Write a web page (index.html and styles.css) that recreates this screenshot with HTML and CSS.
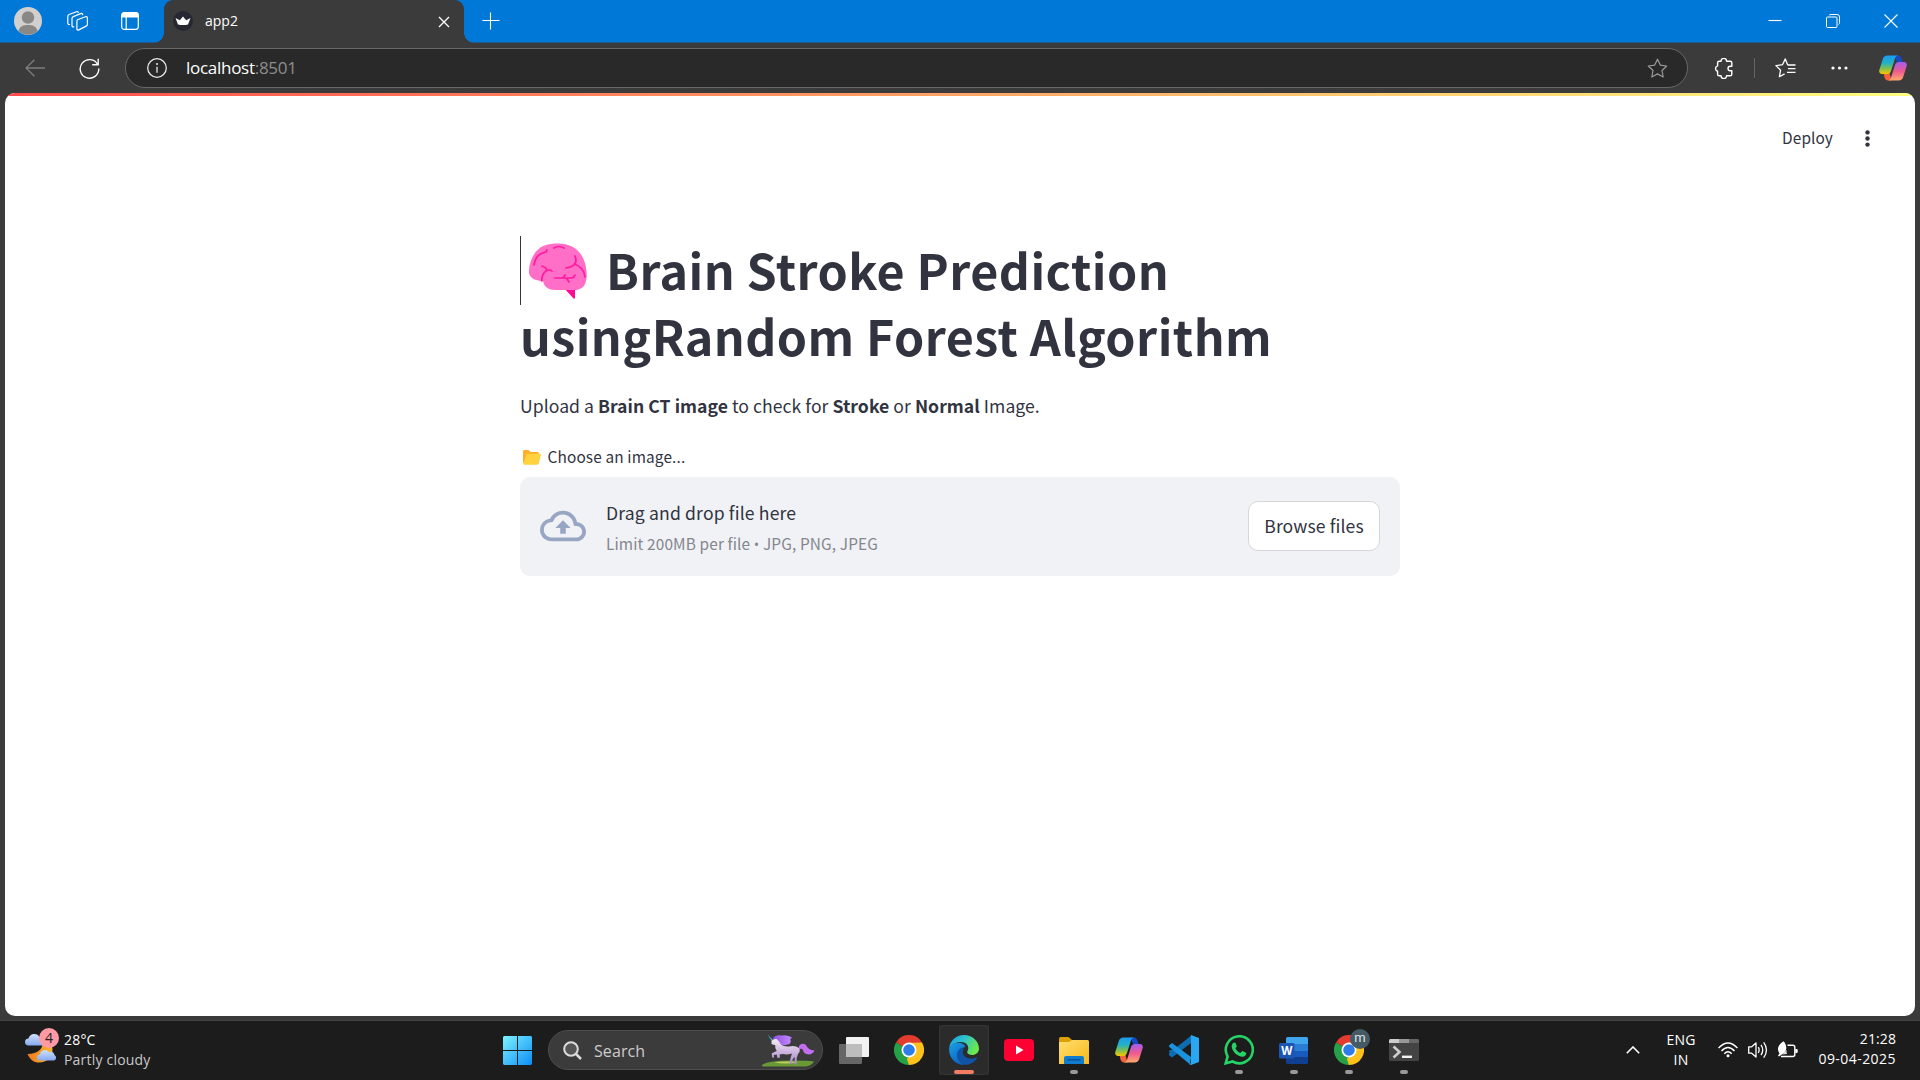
FILE: index.html
```html
<!DOCTYPE html>
<html lang="en">
<head>
<meta charset="utf-8">
<title>app2</title>
<link rel="stylesheet" href="styles.css">
</head>
<body>
<svg class="defs" width="0" height="0" aria-hidden="true">
  <defs>
    <linearGradient id="copL" x1="0" y1="0" x2="0" y2="1"><stop offset="0" stop-color="#1a9df0"/><stop offset=".4" stop-color="#22b0c8"/><stop offset=".7" stop-color="#7fbf50"/><stop offset="1" stop-color="#f8c800"/></linearGradient>
    <linearGradient id="copR" x1="0" y1="0" x2="0" y2="1"><stop offset="0" stop-color="#a45cf0"/><stop offset=".5" stop-color="#ee5a90"/><stop offset="1" stop-color="#ffa96a"/></linearGradient>
    <linearGradient id="winG" x1="0" y1="0" x2="1" y2="1"><stop offset="0" stop-color="#7df3ff"/><stop offset="1" stop-color="#0c8cf5"/></linearGradient>
    <linearGradient id="edgeTop" x1="0" y1="0" x2="1" y2=".4"><stop offset="0" stop-color="#1a9de0"/><stop offset=".5" stop-color="#2ec2cf"/><stop offset="1" stop-color="#6ae84e"/></linearGradient>
    <linearGradient id="edgeL" x1="0" y1="0" x2=".6" y2="1"><stop offset="0" stop-color="#1ba0e6"/><stop offset="1" stop-color="#0a63c0"/></linearGradient>
    <linearGradient id="folder" x1="0" y1="0" x2="1" y2="1"><stop offset="0" stop-color="#ffdf70"/><stop offset="1" stop-color="#f9b81a"/></linearGradient>
    <linearGradient id="mane" x1="0" y1="0" x2="1" y2="0"><stop offset="0" stop-color="#8a4fe0"/><stop offset="1" stop-color="#c98bff"/></linearGradient>
    <linearGradient id="coat" x1="0" y1="0" x2="0" y2="1"><stop offset="0" stop-color="#f3e9f6"/><stop offset="1" stop-color="#a883c8"/></linearGradient>
    <linearGradient id="cloud" x1="0" y1="0" x2="0" y2="1"><stop offset="0" stop-color="#cfe0fb"/><stop offset="1" stop-color="#86aaf0"/></linearGradient>
    <linearGradient id="moon" x1="0" y1="0" x2="1" y2="0"><stop offset="0" stop-color="#f07a20"/><stop offset="1" stop-color="#fbb62c"/></linearGradient>
    <symbol id="copilot" viewBox="0 0 28 26">
      <path d="M15 .5h4c2 0 3 1.500 3.500 3.500l1.500 4h-5z" fill="#1848c8"/>
      <path d="M9 25.500c-2 0-3-1.500-3.500-3L4.500 18h6l2 7.500z" fill="#f4623a"/>
      <path d="M8.500.5H19c-2 .3-2.800 2-3.400 4L12 16c-.7 2-2 3-4 3H3C.8 19-.2 17.200.3 15L3.800 4C4.500 1.800 6 .5 8.500.5z" fill="url(#copL)"/>
      <path d="M19.500 25.500H9c2-.3 2.800-2 3.400-4L16 10c.7-2 2-3 4-3h5c2.200 0 3.200 1.800 2.700 4l-3.500 11c-.7 2.200-2.200 3.500-4.700 3.500z" fill="url(#copR)"/>
    </symbol>
    <symbol id="chrome" viewBox="0 0 48 48">
      <path d="M24 24L3.200 12A24 24 0 0 1 44.800 12z" fill="#e33b2e"/>
      <path d="M24 24L44.800 12A24 24 0 0 1 24 48z" fill="#fcc21b"/>
      <path d="M24 24L24 48A24 24 0 0 1 3.200 12z" fill="#26a148"/>
      <path d="M24 12h20.800L34 30z" fill="#fcc21b"/>
      <path d="M34.400 30L24 48 19 34z" fill="#fcc21b"/>
      <path d="M3.200 12L13.600 30l10.400 6-7 4z" fill="#26a148"/>
      <path d="M3.200 12h41.600L24 13z" fill="#e33b2e"/>
      <circle cx="24" cy="24" r="12" fill="#fff"/><circle cx="24" cy="24" r="9.300" fill="#2f7de9"/>
    </symbol>
  </defs>
</svg>
<div class="screen">
  <header class="titlebar">
    <div class="title-left">
      <svg class="avatar" viewBox="0 0 28 28"><circle cx="14" cy="14" r="14" fill="#d2d0ce"/><circle cx="14" cy="10.500" r="6.200" fill="#8a8886"/><path d="M4.500 24c1-5 5-6 9.500-6s8.500 1 9.500 6A14 14 0 0 1 4.500 24z" fill="#8a8886"/></svg>
      <svg class="workspaces" viewBox="0 0 22 20" fill="none" stroke="#fff" stroke-width="1.200" stroke-linejoin="round" stroke-linecap="round"><path d="M10.500 8.700l8-3c1-.3 1.900.2 1.900 1.200v6.300c0 .9-.4 1.500-1.200 1.900l-7.400 3.800c-1 .5-1.900 0-1.900-1v-7.300c0-.9 0-1.500.6-1.900z"/><path d="M6.800 15.800c-1.300.5-1.800-.2-1.800-1.300V7.600c0-1 .4-1.600 1.300-2l7.400-3c1-.4 2 .1 2 1.100"/><path d="M2.500 13.500C1.300 13.600.8 13 .8 12V5.500c0-1 .4-1.600 1.300-2L9.500.8c.9-.3 1.700 0 1.900.7"/></svg>
      <svg class="vtabs" viewBox="0 0 18 18"><rect x=".7" y=".7" width="16.600" height="16.600" rx="2.500" fill="none" stroke="#fff" stroke-width="1.200"/><path d="M.5 5.500V3A2.500 2.500 0 0 1 3 .5h12A2.500 2.500 0 0 1 17.500 3v2.500z" fill="#fff"/><path d="M5.200 5v12" stroke="#fff" stroke-width="1.200"/></svg>
    </div>
    <div class="tab">
      <svg class="favicon" viewBox="0 0 20 20"><circle cx="10" cy="10" r="10" fill="#262730"/><path d="M2.500 7l4.300 2.200L10 5.500l3.200 3.700L17.500 7l-2.500 6.500c-3 .8-7 .8-10 0z" fill="#fff"/></svg>
      <span class="tab-title">app2</span>
      <svg class="tab-close" viewBox="0 0 12 12"><path d="M1 1l10 10M11 1L1 11" stroke="#fff" stroke-width="1.300"/></svg>
    </div>
    <svg class="newtab" viewBox="0 0 18 18"><path d="M8.500 .5v17M.5 8.500h17" stroke="#fff" stroke-width="1.100"/></svg>
    <div class="window-controls">
      <svg width="14" height="14" viewBox="0 0 14 14"><path d="M.5 6.500h13" stroke="#fff" stroke-width="1.100"/></svg>
      <svg width="14" height="14" viewBox="0 0 14 14" fill="none" stroke="#fff"><rect x=".5" y="3" width="10.500" height="10.500" rx="1"/><path d="M3.200 1.200C3.600.7 4 .5 5 .5h6a2.500 2.500 0 0 1 2.500 2.500v5.500c0 1-.2 1.500-.8 2"/></svg>
      <svg width="14" height="14" viewBox="0 0 14 14"><path d="M.5.5l13 13M13.500.5l-13 13" stroke="#fff" stroke-width="1.100"/></svg>
    </div>
  </header>
  <nav class="toolbar">
    <svg class="back" viewBox="0 0 20 18"><path d="M9.500.7L1 9l8.500 8.300M1 9h19" fill="none" stroke="#7d7d7d" stroke-width="1.300"/></svg>
    <svg class="reload" viewBox="0 0 21 21"><path d="M18.700 6.500A9.300 9.300 0 1 0 19.800 10.500M19.200.8v6h-6" fill="none" stroke="#fff" stroke-width="1.400"/></svg>
    <div class="address">
      <svg class="info" viewBox="0 0 20 20"><circle cx="10" cy="10" r="9.300" fill="none" stroke="#e8e8e8" stroke-width="1.300"/><path d="M10 8.800v6" stroke="#e8e8e8" stroke-width="1.300"/><circle cx="10" cy="6" r="1" fill="#e8e8e8"/></svg>
      <span class="url"><b>localhost</b><i>:8501</i></span>
      <svg class="star" viewBox="0 0 21 20"><path d="M10.500 1.200l2.800 5.900 6.400.9-4.700 4.500 1.200 6.500-5.700-3.100L4.800 19 6 12.500 1.300 8l6.400-.9z" fill="none" stroke="#9a9a9a" stroke-width="1.200" stroke-linejoin="round"/></svg>
    </div>
    <svg class="puzzle" viewBox="0 0 19 21"><path d="M7 3.200a2.800 2.800 0 0 1 5.600 0h3.600a1.600 1.600 0 0 1 1.600 1.600v3.400h-1.500a2.300 2.300 0 0 0 0 4.600h1.500v3.400a1.600 1.600 0 0 1-1.600 1.600h-3.600a2.800 2.800 0 0 1-5.600 0H5.200a1.600 1.600 0 0 1-1.600-1.600v-3a2.800 2.800 0 0 1 0-5.400v-3a1.600 1.600 0 0 1 1.600-1.600z" fill="none" stroke="#fff" stroke-width="1.400" stroke-linejoin="round"/></svg>
    <span class="divider"></span>
    <svg class="favs" viewBox="0 0 21 20"><path d="M12.800 7.200L10.300.9 7.500 6.700l-6.600.9 4.700 4.600-1.200 6.500 5.200-2.800" fill="none" stroke="#fff" stroke-width="1.300" stroke-linejoin="round"/><path d="M13 10.600h7.500M12 14.300h8.500M13 7h7.500" stroke="#fff" stroke-width="1.300"/></svg>
    <svg class="more" viewBox="0 0 17 4" fill="#fff"><circle cx="2" cy="2" r="1.600"/><circle cx="8.500" cy="2" r="1.600"/><circle cx="15" cy="2" r="1.600"/></svg>
    <svg class="side-copilot"><use href="#copilot"/></svg>
  </nav>
  <div class="viewport">
    <div class="page">
      <div class="decoration"></div>
      <div class="app-header">
        <span class="deploy">Deploy</span>
        <svg class="kebab" viewBox="0 0 5 17" fill="#31333f"><circle cx="2.500" cy="2.400" r="2.200"/><circle cx="2.500" cy="8.500" r="2.200"/><circle cx="2.500" cy="14.600" r="2.200"/></svg>
      </div>
      <main class="content">
        <h1 class="heading"><svg class="brain" viewBox="0 0 58 56"><path d="M35 45h11v10.500h-1.500z" fill="#ff0a96"/><path d="M29 .5C41 .5 50 6 54 15c4 8 5 20 2 26-2 4-6 6-11 6H26c-6 0-11-3-12-9-6 0-13-2-14-8C-.5 18 6 6 15 2.800 20 .8 24 .5 29 .5z" fill="#ff6ec7"/><g fill="none" stroke="#ff1a9e" stroke-width="1.700" stroke-linecap="round" stroke-linejoin="round"><path d="M5 22c1-8 6-12 12-13l1-2M25 5q5-3 10 0M13 23q6 2 4 5-5 4-4 10M17 28q4-2 6 0M46 13q4 10-9 12M45 21q10 3 11 13M26 35h8l2-3M32 35h10q3 0 4-3M38 36l2 3"/></g></svg>Brain Stroke Prediction<br>usingRandom Forest Algorithm</h1>
        <p class="intro">Upload a <b>Brain CT image</b> to check for <b>Stroke</b> or <b>Normal</b> Image.</p>
        <label class="choose"><svg class="folder" viewBox="0 0 18 15"><path d="M0 1.800C0 .7.600 0 1.600 0h3.800l2.200 2h6.800c.9 0 1.500.6 1.500 1.500V13H1.500C.6 13 0 12.500 0 11.500z" fill="#ffae2b"/><path d="M5 3.800h11.800c.9 0 1.300.6 1.100 1.400l-2.200 8.300c-.2.800-.7 1.200-1.500 1.200H1.600c-.9 0-1.300-.6-1.100-1.400l2.700-8.200c.3-.9.900-1.300 1.800-1.300z" fill="#ffd23e"/></svg><span>Choose an image...</span></label>
        <section class="dropzone">
          <svg class="cloud" viewBox="0 0 24 24" fill="#97a6c3"><path d="M19.350 10.040A7.490 7.490 0 0 0 12 4C9.110 4 6.600 5.640 5.350 8.040A5.994 5.994 0 0 0 0 14c0 3.310 2.690 6 6 6h13c2.760 0 5-2.240 5-5 0-2.640-2.050-4.780-4.650-4.960zM19 18H6c-2.210 0-4-1.790-4-4 0-2.050 1.530-3.760 3.560-3.970l1.070-.11.5-.95A5.469 5.469 0 0 1 12 6c2.620 0 4.880 1.860 5.390 4.430l.3 1.500 1.530.11A2.980 2.980 0 0 1 22 15c0 1.650-1.350 3-3 3zM8 13h2.550v3h2.900v-3H16l-4-4z"/></svg>
          <div class="drop-text"><span class="drag">Drag and drop file here</span><span class="limit">Limit 200MB per file <span class="bullet">•</span> JPG, PNG, JPEG</span></div>
          <button class="browse">Browse files</button>
        </section>
      </main>
    </div>
  </div>
  <footer class="taskbar">
    <div class="weather">
      <svg class="weather-icon" viewBox="0 0 36 36"><path d="M18 13c0 8-5 13-15.500 13C5 32 9 34.500 14 34.500c8 0 13.500-5 13.500-13 0-5-4-9-9.500-8.500z" fill="url(#moon)"/><path d="M3.500 17.500a3.500 3.500 0 0 1 0-7 6 6 0 0 1 11-1.500 4.500 4.500 0 0 1 4 8.500z" fill="url(#cloud)"/><path d="M15 32.500a3 3 0 0 1 0-6 5 5 0 0 1 9-2.500 4.500 4.500 0 0 1 5.500 3 3 3 0 0 1-.5 5.500z" fill="url(#cloud)"/><circle cx="24" cy="10" r="10" fill="#ff99a4"/><text x="24" y="15" text-anchor="middle" class="badge-num">4</text></svg>
      <div class="weather-text"><span class="temp">28°C</span><span class="cond">Partly cloudy</span></div>
    </div>
    <div class="apps">
      <div class="cell"><svg width="29" height="29" viewBox="0 0 29 29"><path d="M1 0h13v14H0V1zM15 0h13l1 1v13H15zM0 15h14v14H1l-1-1zM15 15h14v13l-1 1H15z" fill="url(#winG)"/></svg></div>
      <div class="search">
        <svg width="19" height="19" viewBox="0 0 19 19" fill="none" stroke="#ddd"><circle cx="8" cy="8" r="6.800" fill="#555" stroke-width="2"/><path d="M13 13l5 5" stroke-width="2.500"/></svg>
        <span class="search-text">Search</span>
        <svg class="unicorn" viewBox="0 0 54 34">
          <path d="M0 32q6-4.500 28-4.500 19 0 24 1-2 4-8 5H3q-4 0-3-1.500z" fill="#6a9a35"/><path d="M12 29.500q10-1.500 24-.5-8 2.500-24 .5z" fill="#c3cf62"/>
          <path d="M37 13q3-4 7-1 2 5 8.500 5.500-2 4-6 4-5-.5-5.500-4.500-1-2-4-1z" fill="#c36df2"/>
          <path d="M5.500 1.500L11 7l-1.200 1z" fill="#4bb6d6"/>
          <path d="M10.500 5.500Q14 1 20 2.500q6-1 10.500 2.500-3 0-2 2 1 2-1 4-5 2-9 .5-3-4-8-6z" fill="url(#mane)"/>
          <path d="M9.500 8q2-2.500 5-2 3 2 4.500 5.500 3 2.500 8 2 6-1.500 10 1.500 2 3-1 6l-1.300 4-.2 6.500h-2l.3-7.500-2 2-1.300 5h-2l1-6 1.500-4.500q-5 1.500-9 .5l-3.500.5.5 3-2.500.5-.8-3.500-3 .5.5 2.500h-2l-.5-4q3-2 5-2.500-2-2.500-1.500-6-2 0-3.700-1z" fill="url(#coat)"/>
        </svg>
      </div>
      <div class="cell first"><svg width="30" height="27" viewBox="0 0 30 27"><rect x="7" y="0" width="23" height="20" rx="1" fill="#f2f2f2"/><rect x="0" y="7" width="23" height="20" rx="1" fill="#666"/><path d="M7 7h16v13H7z" fill="#bdbdbd"/></svg></div>
      <div class="cell"><svg width="30" height="30"><use href="#chrome"/></svg></div>
      <div class="cell active"><svg width="30" height="30" viewBox="0 0 30 30"><path d="M15 0C7 0 1 6 .3 12.500 3 9 7 7 12 7c7 0 8 6 7 8-1 1.500-1.500 3 1.500 4.500 4 1.500 9.500-.5 9.500-6C30 6 23 0 15 0z" fill="url(#edgeTop)"/><path d="M.3 12.500C-1 22 6 30 15.500 30 10 28 8.500 23 9.500 19c.8-4 3.500-6.500 7-7C14 5 3 7.500.3 12.500z" fill="url(#edgeL)"/><path d="M13 12.800C9 14 7 19 8.500 23c2 5 6 7.300 10 6.800 4.500-.8 8-3.500 9.500-6.800.3-.7-.2-1-1-.6-4 2-8.500 1.300-11-1-3-2.600-2.500-5.400-1-7.400z" fill="#1053a4"/></svg><span class="run on"></span></div>
      <div class="cell"><svg width="30" height="22" viewBox="0 0 30 22"><rect width="30" height="22" rx="4" fill="#ff0033"/><path d="M12 6.500v9l7.500-4.500z" fill="#fff"/></svg></div>
      <div class="cell"><svg width="30" height="27" viewBox="0 0 30 27"><path d="M0 1.500Q0 0 1.500 0h8L13 3v6H0z" fill="#dea000"/><path d="M0 5h10l3-2h15.500Q30 3 30 4.500V27H0z" fill="url(#folder)"/><path d="M5 27v-6q0-2 2-2h16q2 0 2 2v6z" fill="#0f7ccf"/><path d="M8.500 22.800h13" stroke="#0a4f91" stroke-width="1.300"/></svg><span class="run"></span></div>
      <div class="cell"><svg width="28" height="26"><use href="#copilot"/></svg></div>
      <div class="cell"><svg width="30" height="30" viewBox="0 0 30 30"><path d="M22 .5L2.500 18.500 0 16.500v-.7L22 8z" fill="#1274b8"/><path d="M0 18l20-15.500L22 8 3 22.500l-3-2.300z" fill="#0d6db0"/><path d="M3 8L0 10.500v1.300L21 29.500 22 22z" fill="#1b92dc"/><path d="M22 0l8 3v24l-8 3-1.500-.5L22 28z" fill="#2aa7f2"/></svg></div>
      <div class="cell"><svg width="30" height="30" viewBox="0 0 30 30"><path d="M1.700 28.300l1.900-6.800A13.500 13.500 0 1 1 8.600 26.500z" fill="none" stroke="#25d366" stroke-width="2.600"/><path d="M10.500 7.500c.6 0 1 .2 1.200.8l1 2.500c.2.500 0 .9-.3 1.300l-1 1.200c1 2.200 2.800 3.800 5 4.700l1.300-1.500c.4-.4.800-.5 1.300-.3l2.600 1.200c.5.200.8.500.7 1.200-.2 2-1.700 3.100-3.600 3.100-5 0-11-5.500-11-10.500 0-1.700 1.200-3.700 2.800-3.700z" fill="#25d366"/></svg><span class="run"></span></div>
      <div class="cell"><svg width="29" height="27" viewBox="0 0 29 27"><path d="M7 1.500Q7 0 8.500 0h19Q29 0 29 1.500V7H7z" fill="#41a5ee"/><path d="M7 7h22v7H7z" fill="#2b7cd3"/><path d="M7 14h22v6.500H7z" fill="#185abd"/><path d="M7 20.500h22v5q0 1.500-1.500 1.500h-19Q7 27 7 25.500z" fill="#103f91"/><rect x="0" y="6" width="15.500" height="15.500" rx="1.500" fill="#1b56b5"/><text x="7.700" y="17.800" text-anchor="middle" class="word-w">W</text></svg><span class="run"></span></div>
      <div class="cell"><svg width="30" height="30"><use href="#chrome"/></svg><span class="profile">m</span><span class="run"></span></div>
      <div class="cell"><svg width="30" height="22" viewBox="0 0 30 22"><rect width="30" height="22" rx="1.500" fill="#444"/><path d="M0 4V1.500Q0 0 1.500 0H10v4z" fill="#ccc"/><path d="M10 0h10v4H10z" fill="#999"/><path d="M20 0h8.500Q30 0 30 1.500V4H20z" fill="#666"/><path d="M4.500 7.500l6 5.500-6 5.500" fill="none" stroke="#ccc" stroke-width="2.600"/><path d="M13 17.800h10" stroke="#f2f2f2" stroke-width="2.400"/></svg><span class="run"></span></div>
    </div>
    <div class="tray">
      <svg class="chev" viewBox="0 0 14 8"><path d="M.8 7.200L7 1l6.200 6.200" fill="none" stroke="#fff" stroke-width="1.600"/></svg>
      <div class="lang"><span class="eng">ENG</span><span>IN</span></div>
      <svg class="wifi" viewBox="0 0 20 16" fill="none" stroke="#fff" stroke-width="1.500"><path d="M.6 6Q10-4 19.400 6M3.500 9Q10 2 16.500 9M6.300 11.800q3.700-4 7.400 0"/><circle cx="10" cy="13.700" r="1.500" fill="#fff" stroke="none"/></svg>
      <svg class="vol" viewBox="0 0 20 18" fill="none" stroke="#fff" stroke-width="1.300"><path d="M.7 5.800v6.400h3L8 16V2L3.700 5.800z" stroke-linejoin="round"/><path d="M10.300 6.200q1.700 2.800 0 5.600M13 3.800q3.500 5.200 0 10.400M15.700 1.300q5.500 7.700 0 15.400"/></svg>
      <svg class="batt" viewBox="0 0 21 17"><path d="M10.500 4.300h5.300a2 2 0 0 1 2 2v7.200a2 2 0 0 1-2 2H4" fill="none" stroke="#fff" stroke-width="1.400"/><path d="M18.300 8h1.500q.9 0 .9.900v2.200q0 .9-.9.900h-1.500z" fill="#fff"/><path d="M6.500.2c3 3 4.500 9-.2 12.300L2 15.500l-1-1 1.500-2C-.5 8 1 4 6.500.2z" fill="#fff"/><path d="M5.500 13.500q1.500-3 4.500-4.500-1 2 0 4z" fill="#ddd"/></svg>
      <div class="clock"><span class="time">21:28</span><span class="date">09-04-2025</span></div>
    </div>
  </footer>
</div>
</body>
</html>
```
FILE: styles.css
```css
* { box-sizing: border-box; }
body { margin: 0; background: #1c1c1c; }
svg { display: block; flex: none; }
.defs { position: absolute; }

.screen {
  width: 1920px;
  height: 1080px;
  overflow: hidden;
  display: flex;
  flex-direction: column;
  font-family: "Open Sans", "Noto Sans", sans-serif;
  font-size: 14px;
  color: #fff;
}

/* Browser title bar */
.titlebar {
  height: 43px;
  flex: none;
  display: flex;
  background: #0078d7;
  border-bottom: 1px solid #1e5c90;
}
.title-left { width: 164px; display: flex; align-items: center; padding-left: 14px; }
.avatar { width: 28px; height: 28px; }
.workspaces { width: 22px; height: 20px; margin-left: 25px; }
.vtabs { width: 18px; height: 18px; margin-left: 32px; }
.tab {
  position: relative;
  width: 300px;
  height: 43px;
  display: flex;
  align-items: center;
  padding: 0 14px 1px 9px;
  background: #3b3b3b;
  border-radius: 9px 9px 0 0;
}
.tab::before, .tab::after {
  content: "";
  position: absolute;
  bottom: 0;
  width: 10px;
  height: 10px;
}
.tab::before { left: -10px; background: radial-gradient(circle at 0 0, transparent 9.500px, #3b3b3b 10px); }
.tab::after { right: -10px; background: radial-gradient(circle at 100% 0, transparent 9.500px, #3b3b3b 10px); }
.favicon { width: 20px; height: 20px; }
.tab-title { margin: 0 0 2px 12px; font-size: 14px; }
.tab-close { width: 12px; height: 12px; margin: 2px 0 0 auto; }
.newtab { width: 18px; height: 18px; margin: 12px 0 0 18px; }
.window-controls { margin-left: auto; display: flex; gap: 44px; padding: 14px 22px 0 0; }

/* Address toolbar */
.toolbar {
  height: 50px;
  flex: none;
  display: flex;
  align-items: center;
  padding: 0 13px 0 25px;
  background: #3b3b3b;
}
.back { width: 20px; height: 18px; }
.reload { width: 21px; height: 21px; margin-left: 34px; }
.address {
  width: 1563px;
  height: 40px;
  margin-left: 25px;
  padding: 0 19px 0 21px;
  display: flex;
  align-items: center;
  background: #292929;
  border: 1px solid #686868;
  border-radius: 20px;
}
.info { width: 20px; height: 20px; }
.url { margin: 0 0 1px 19px; font-size: 17px; letter-spacing: -0.280px; line-height: 24px; display: flex; }
.url b { font-weight: 400; }
.url i { font-style: normal; color: #8e8e8e; }
.star { width: 21px; height: 20px; margin-left: auto; }
.puzzle { width: 19px; height: 21px; margin-left: 26px; }
.divider { width: 1px; height: 20px; margin-left: 21px; background: #666; }
.favs { width: 21px; height: 20px; margin-left: 20px; }
.more { width: 17px; height: 4px; margin-left: 35px; }
.side-copilot { width: 28px; height: 26px; margin-left: auto; }

/* Page */
.viewport { height: 928px; flex: none; padding: 0 5px 4px; background: #3b3b3b; border-bottom: 1px solid #444; }
.page {
  height: 923px;
  background: #fff;
  border-radius: 10px;
  overflow: hidden;
  color: #31333f;
  font-family: "Noto Sans CJK SC", "Noto Sans", sans-serif;
}
.decoration { height: 3px; background: linear-gradient(90deg, #ff4b4b, #fffd80); }
.app-header { height: 84px; display: flex; justify-content: flex-end; align-items: center; padding-right: 45px; }
.deploy { margin-bottom: 2px; font-size: 15.400px; letter-spacing: 0.100px; line-height: 24px; }
.kebab { width: 5px; height: 17px; margin-left: 32px; }
.content { width: 880px; margin: 56px auto 0; }
.heading {
  height: 132px;
  margin: 0;
  font-size: 48.400px;
  font-weight: 700;
  letter-spacing: 0.450px;
  line-height: 66px;
  white-space: nowrap;
  background: linear-gradient(#31333f, #31333f) 0 0 / 1px 69px no-repeat;
}
.brain { display: inline-block; width: 58px; height: 56px; margin: 0 19px 0 9px; vertical-align: -9px; }
.intro { margin: 22px 0 0; height: 32px; font-size: 17.600px; letter-spacing: 0.040px; line-height: 32px; white-space: nowrap; }
.choose { display: flex; align-items: center; height: 28px; margin-top: 20px; padding-left: 3px; font-size: 15.400px; letter-spacing: 0.130px; line-height: 28px; }
.folder { width: 18px; height: 15px; margin: 3px 6.500px 0 0; }
.dropzone {
  height: 99px;
  margin-top: 7px;
  padding: 0 20px 1px;
  display: flex;
  align-items: center;
  background: #f0f2f6;
  border-radius: 10px;
}
.cloud { width: 46px; height: 46px; }
.drop-text { margin: 2px 0 0 20px; display: flex; flex-direction: column; align-items: flex-start; white-space: nowrap; }
.drag { font-size: 17.600px; letter-spacing: 0.150px; line-height: 32px; }
.limit { font-size: 15.400px; letter-spacing: 0.130px; line-height: 25px; margin-top: 2px; color: #85868e; }
.bullet { font-family: "Open Sans", sans-serif; font-size: 14.500px; }
.browse {
  width: 132px;
  height: 50px;
  margin-left: auto;
  padding: 0;
  font: 17.600px/32px "Noto Sans CJK SC", "Noto Sans", sans-serif;
  letter-spacing: 0.100px;
  color: #31333f;
  background: #fff;
  border: 1px solid #d6d6d9;
  border-radius: 10px;
}

/* Taskbar */
.taskbar { height: 59px; display: flex; background: #1c1c1c; }
.weather { width: 490px; display: flex; padding: 7px 0 0 25px; }
.weather-icon { width: 36px; height: 36px; }
.badge-num { font-size: 14px; fill: #222; }
.weather-text { display: flex; flex-direction: column; align-items: flex-start; margin: 2px 0 0 3px; line-height: 20px; }
.temp { letter-spacing: 0.200px; }
.cond { color: #c8c8c8; letter-spacing: 0.200px; }
.apps { display: flex; align-items: center; height: 58px; }
.cell { position: relative; width: 55px; height: 50px; display: flex; align-items: center; justify-content: center; }
.cell.first { margin-left: 3px; }
.cell.active { background: #2b2b2b; background-clip: content-box; padding: 0 2.500px; }
.cell.active::before { content: ""; position: absolute; inset: 0 2.500px; border: 1px solid #363636; border-radius: 5px; }
.run { position: absolute; bottom: 1px; left: 24px; width: 8px; height: 4px; border-radius: 2px; background: #999; }
.run.on { left: 17.500px; width: 20px; background: #f47c62; }
.profile {
  position: absolute;
  left: 29px;
  top: 4px;
  width: 20px;
  height: 20px;
  border-radius: 50%;
  background: #455a64;
  color: #dfe3e5;
  font: 13px/18px Roboto, sans-serif;
  text-align: center;
}
.word-w { font: 700 11.500px "Open Sans", sans-serif; fill: #fff; }
.search {
  width: 275px;
  height: 40px;
  margin-left: 3px;
  padding: 0 6px 0 14px;
  display: flex;
  align-items: center;
  background: #3b3b3b;
  border: 1px solid #4d4d4d;
  border-radius: 20px;
}
.search-text { margin: 1px 0 0 12px; font-size: 16px; letter-spacing: 0.100px; color: #ccc; line-height: 22px; }
.unicorn { width: 54px; height: 34px; margin-left: auto; }
.tray { margin-left: auto; display: flex; padding: 8px 24px 0 0; height: 59px; line-height: 20px; }
.chev { width: 14px; height: 8px; margin-top: 17px; }
.lang { width: 36px; margin: 1px 0 0 23px; display: flex; flex-direction: column; align-items: center; letter-spacing: 0.200px; }
.wifi { width: 20px; height: 16px; margin: 13px 0 0 19px; }
.vol { width: 20px; height: 18px; margin: 12px 0 0 10px; }
.batt { width: 21px; height: 17px; margin: 12px 0 0 9px; }
.clock { width: 80px; margin-left: 18px; display: flex; flex-direction: column; align-items: flex-end; letter-spacing: 0.450px; }
.time { letter-spacing: 0.100px; }
```
